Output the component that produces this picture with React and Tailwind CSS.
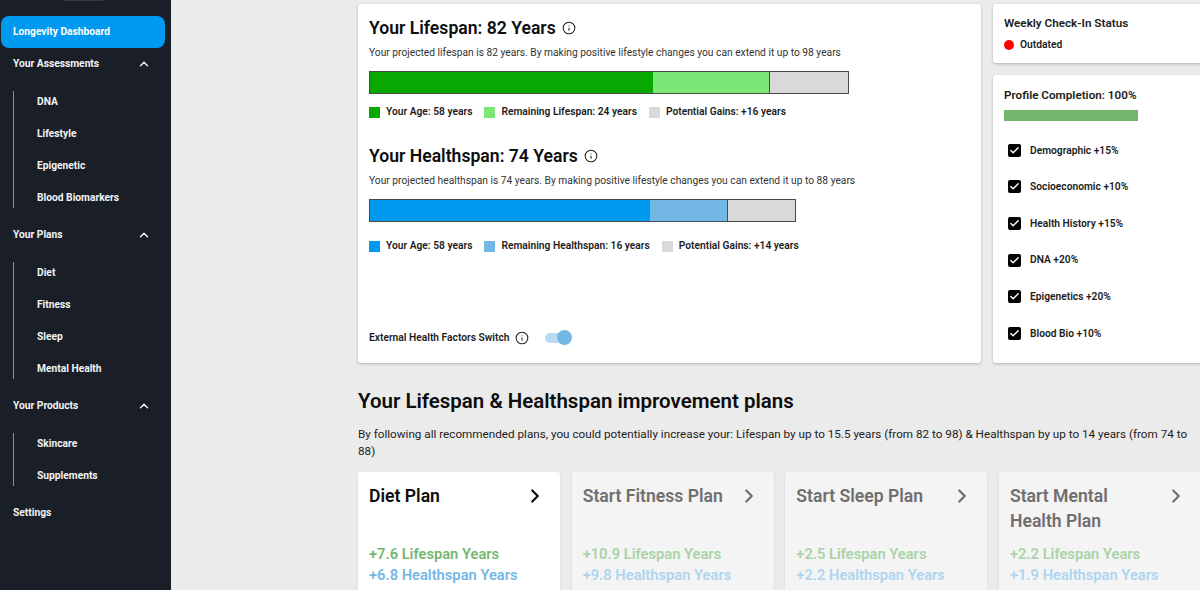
import React from "react";
import { ChevronUp, ChevronRight, Info, Check } from "lucide-react";

function NavSection({ title, items }) {
  return (
    <div>
      <div className="h-8 flex items-center justify-between pl-[13px] pr-[20px] text-[10.24px] font-bold text-[#f1f3f5]">
        <span>{title}</span>
        <ChevronUp size={14} strokeWidth={2.5} />
      </div>
      <div className="mt-[11px] mb-[11px] ml-[13px] border-l border-[#8d9096] pl-[23px] flex flex-col gap-[11px]">
        {items.map((t) => (
          <div key={t} className="h-[21px] flex items-center text-[10.24px] font-bold text-[#f1f3f5]">{t}</div>
        ))}
      </div>
    </div>
  );
}

function Sidebar() {
  return (
    <aside className="w-[171px] shrink-0 h-full bg-[#1a1f27] overflow-hidden relative">
      <div className="absolute left-[63px] top-0 w-[40px] h-[1px] bg-[#343941]" />
      <div className="pt-[16px] pl-[1px] pr-[6px]">
        <div className="h-[32px] rounded-[8px] bg-[#0099f0] flex items-center pl-[12px] text-[10.24px] font-bold text-white">Longevity Dashboard</div>
      </div>
      <NavSection title="Your Assessments" items={["DNA", "Lifestyle", "Epigenetic", "Blood Biomarkers"]} />
      <NavSection title="Your Plans" items={["Diet", "Fitness", "Sleep", "Mental Health"]} />
      <NavSection title="Your Products" items={["Skincare", "Supplements"]} />
      <div className="h-8 flex items-center pl-[13px] text-[10.24px] font-bold text-[#f1f3f5]">Settings</div>
    </aside>
  );
}

function Legend({ items, className }) {
  return (
    <div className={"flex items-center text-[10.24px] font-semibold text-[#1c1c1c] " + className}>
      {items.map(([color, label]) => (
        <div key={label} className="flex items-center gap-[6px] mr-[12px]">
          <span className={"w-[11px] h-[11px] " + color} />
          <span>{label}</span>
        </div>
      ))}
    </div>
  );
}

function Span({ title, desc, bars, barW, barClass, legend, legendClass }) {
  return (
    <div>
      <div className="flex items-center h-[24px]">
        <h2 className="text-[17.6px] font-semibold text-[#0d0d0d]">{title}</h2>
        <Info size={14} strokeWidth={1.8} className="ml-[6px] text-[#222]" />
      </div>
      <p className="mt-[6px] text-[10.24px] leading-[14px] text-[#333]">{desc}</p>
      <div className={"h-[23px] border border-[#4a4a4a] flex " + barClass} style={{ width: barW }}>
        {bars}
      </div>
      <Legend items={legend} className={legendClass} />
    </div>
  );
}

function LeftCard() {
  return (
    <section className="w-[623px] h-[359px] shrink-0 bg-white rounded-[3px] shadow-[0_1px_3px_rgba(0,0,0,0.25)] pl-[11px] pt-[12px] relative">
      <Span
        title="Your Lifespan: 82 Years"
        desc="Your projected lifespan is 82 years. By making positive lifestyle changes you can extend it up to 98 years"
        barW="480px"
        barClass="mt-[11px]"
        bars={<>
          <div className="w-[283px] bg-[#08a803]" />
          <div className="w-[117px] bg-[#7ae776] border-r border-[#4a4a4a]" />
          <div className="flex-1 bg-[#d9d9d9]" />
        </>}
        legend={[["bg-[#08a803]", "Your Age: 58 years"], ["bg-[#7ae776]", "Remaining Lifespan: 24 years"], ["bg-[#d9d9d9]", "Potential Gains: +16 years"]]}
        legendClass="mt-[11px] h-[14px]"
      />
      <div className="mt-[25px]">
        <Span
          title="Your Healthspan: 74 Years"
          desc="Your projected healthspan is 74 years. By making positive lifestyle changes you can extend it up to 88 years"
          barW="427px"
          barClass="mt-[11px]"
          bars={<>
            <div className="w-[280px] bg-[#0099f0]" />
            <div className="w-[78px] bg-[#73b8e4] border-r border-[#4a4a4a]" />
            <div className="flex-1 bg-[#d9d9d9]" />
          </>}
          legend={[["bg-[#0099f0]", "Your Age: 58 years"], ["bg-[#73b8e4]", "Remaining Healthspan: 16 years"], ["bg-[#d9d9d9]", "Potential Gains: +14 years"]]}
          legendClass="mt-[17px] h-[14px]"
        />
      </div>
      <div className="mt-[77px] flex items-center h-[16px]">
        <span className="text-[10.24px] font-semibold text-[#1c1c1c]">External Health Factors Switch</span>
        <Info size={14} strokeWidth={1.8} className="ml-[6px] text-[#222]" />
        <div className="ml-[16px] relative w-[25px] h-[10px] rounded-full bg-[#b9dcf2]">
          <span className="absolute -right-[2px] -top-[3px] w-[15px] h-[15px] rounded-full bg-[#73b8e4]" />
        </div>
      </div>
    </section>
  );
}

const checks = ["Demographic +15%", "Socioeconomic +10%", "Health History +15%", "DNA +20%", "Epigenetics +20%", "Blood Bio +10%"];

function RightColumn() {
  return (
    <div className="w-[220px] shrink-0 flex flex-col gap-[12px]">
      <section className="h-[59px] bg-white rounded-[3px] shadow-[0_1px_3px_rgba(0,0,0,0.25)] pl-[11px] pt-[11px]">
        <div className="text-[11.7px] leading-[16px] font-semibold text-[#1c1c1c]">Weekly Check-In Status</div>
        <div className="mt-[6px] flex items-center text-[10.24px] font-semibold text-[#1c1c1c]">
          <span className="w-[10px] h-[10px] rounded-full bg-[#ff0000] mr-[6px]" />
          Outdated
        </div>
      </section>
      <section className="h-[288px] bg-white rounded-[3px] shadow-[0_1px_3px_rgba(0,0,0,0.25)] pl-[11px] pt-[12px]">
        <div className="text-[11.7px] leading-[16px] font-semibold text-[#1c1c1c]">Profile Completion: 100%</div>
        <div className="mt-[7px] w-[134px] h-[11px] bg-[#73b76f]" />
        <div className="mt-[11px] flex flex-col">
          {checks.map((c) => (
            <div key={c} className="h-[36.6px] flex items-center pl-[4px] text-[10.24px] font-semibold text-[#1c1c1c]">
              <span className="w-[13px] h-[13px] rounded-[2px] bg-black flex items-center justify-center mr-[9px]">
                <Check size={11} strokeWidth={3} className="text-white" />
              </span>
              {c}
            </div>
          ))}
        </div>
      </section>
    </div>
  );
}

function Plan({ title, life, health, active }) {
  return (
    <div className={"w-[202px] shrink-0 h-[140px] rounded-[3px] pl-[11px] pr-[14px] pt-[12px] shadow-[0_1px_2px_rgba(0,0,0,0.12)] " + (active ? "bg-white" : "bg-[#f4f4f4]")}>
      <div className="flex justify-between h-[58px]">
        <h3 className={"text-[17.6px] leading-[25px] font-semibold w-[150px] " + (active ? "text-[#0d0d0d]" : "text-[#6f6f6f]")}>{title}</h3>
        <ChevronRight size={22} strokeWidth={2.4} className={"mt-[1px] " + (active ? "text-[#0d0d0d]" : "text-[#6f6f6f]")} />
      </div>
      <div className={"text-[14.7px] leading-[20px] font-semibold mt-[2px] " + (active ? "text-[#73b76f]" : "text-[#a9d3a7]")}>{life}</div>
      <div className={"text-[14.7px] leading-[20px] font-semibold mt-[1px] " + (active ? "text-[#73b8e4]" : "text-[#add5ef]")}>{health}</div>
    </div>
  );
}

export default function App() {
  return (
    <div className="w-[1200px] h-[590px] overflow-hidden flex bg-[#ebebeb] font-['Roboto',sans-serif]">
      <Sidebar />
      <main className="flex-1 min-w-0 pl-[187px] pt-[4px]">
        <div className="flex gap-[12px]">
          <LeftCard />
          <RightColumn />
        </div>
        <h1 className="mt-[25px] text-[20.48px] leading-[26px] font-semibold text-[#0d0d0d]">Your Lifespan &amp; Healthspan improvement plans</h1>
        <p className="mt-[12px] text-[11.7px] leading-[17px] text-[#1c1c1c]">By following all recommended plans, you could potentially increase your: Lifespan by up to 15.5 years (from 82 to 98) &amp; Healthspan by up to 14 years (from 74 to 88)</p>
        <div className="mt-[12px] flex gap-[11.67px]">
          <Plan active title="Diet Plan" life="+7.6 Lifespan Years" health="+6.8 Healthspan Years" />
          <Plan title="Start Fitness Plan" life="+10.9 Lifespan Years" health="+9.8 Healthspan Years" />
          <Plan title="Start Sleep Plan" life="+2.5 Lifespan Years" health="+2.2 Healthspan Years" />
          <Plan title="Start Mental Health Plan" life="+2.2 Lifespan Years" health="+1.9 Healthspan Years" />
        </div>
      </main>
    </div>
  );
}
